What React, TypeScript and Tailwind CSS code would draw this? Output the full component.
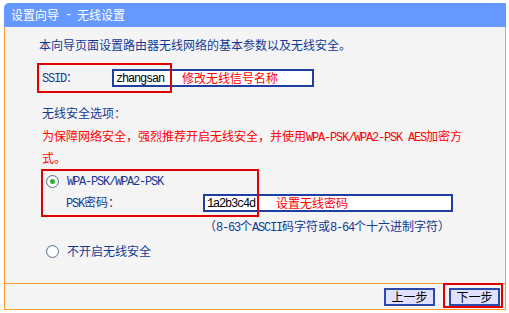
import React from "react";

const M = ({ children }: { children: React.ReactNode }) => (
  <span className="font-mono tracking-[-1.2px]">{children}</span>
);

const Radio = ({ checked }: { checked?: boolean }) => (
  <div className="w-[13px] h-[13px] rounded-full border border-[#5b7592] bg-gradient-to-br from-[#dfe6ee] to-white flex items-center justify-center">
    <div className="w-[9px] h-[9px] rounded-full bg-white flex items-center justify-center">
      {checked && <div className="w-[5px] h-[5px] rounded-full bg-[#2fae2f]" />}
    </div>
  </div>
);

export default function App() {
  return (
    <div className="relative w-[509px] h-[313px] bg-white [font-family:'Noto_Sans_CJK_SC',sans-serif] text-[12px] text-[#133a96] overflow-hidden">
      <div className="pt-[3px] pl-[4px] w-[506px]">
        {/* header */}
        <div className="h-[24px] bg-[#6699ff] rounded-tl-[5px] text-white flex items-center pl-[7px] leading-[24px] whitespace-pre">
          设置向导<M> - </M>无线设置
        </div>
        {/* body */}
        <div className="w-[502px] border-l border-r border-[#ff9933] bg-[#f4f4f4] h-[256px] pl-[34px]">
          <div className="pt-[9px] h-[27px] leading-[18px]">本向导页面设置路由器无线网络的基本参数以及无线安全。</div>
          <div className="mt-[15px] h-[18px] flex items-center">
            <div className="w-[73px] pl-[3px] leading-[18px]">
              <M>SSID</M>：
            </div>
            <div className="w-[202px] h-[18px] bg-white border-2 border-[#1f3fa0] flex items-center pl-[2px] leading-[14px]">
              <span className="text-black w-[66px]"><M>zhangsan</M></span>
              <span className="text-[#ff0000]">修改无线信号名称</span>
            </div>
          </div>
          <div className="mt-[17px] h-[18px] leading-[18px] pl-[3px]">无线安全选项：</div>
          <div className="mt-[4px] pl-[3px] leading-[19px] text-[#ff0000] h-[38px]">
            为保障网络安全，强烈推荐开启无线安全，并使用<M>WPA-PSK/WPA2-PSK AES</M>加密方
            <br />
            式。
          </div>
          <div className="mt-[8px] h-[18px] flex items-center pl-[7px]">
            <Radio checked />
            <span className="ml-[8px] leading-[18px]"><M>WPA-PSK/WPA2-PSK</M></span>
          </div>
          <div className="mt-[4px] h-[18px] flex items-center">
            <div className="w-[164px] pl-[27px] leading-[18px]">
              <M>PSK</M>密码：
            </div>
            <div className="w-[250px] h-[18px] bg-white border-2 border-[#1f3fa0] flex items-center pl-[2px] leading-[14px]">
              <span className="text-black w-[69px]"><M>1a2b3c4d</M></span>
              <span className="text-[#ff0000]">设置无线密码</span>
            </div>
          </div>
          <div className="mt-[5px] h-[18px] leading-[18px] pl-[165px]">
            （<M>8-63</M>个<M>ASCII</M>码字符或<M>8-64</M>个十六进制字符）
          </div>
          <div className="mt-[7px] h-[18px] flex items-center pl-[7px]">
            <Radio />
            <span className="ml-[8px] leading-[18px]">不开启无线安全</span>
          </div>
        </div>
        {/* footer */}
        <div className="w-[502px] h-[27px] border border-[#ff9933] bg-[#f4f4f4] flex items-center justify-end pr-[5px] gap-[14px]">
          <button className="w-[51px] h-[18px] bg-[#e0e0ff] border-2 border-[#2a49a8] text-black text-[12px] leading-[14px]">上一步</button>
          <button className="w-[51px] h-[18px] bg-[#e0e0ff] border-2 border-[#2a49a8] text-black text-[12px] leading-[14px]">下一步</button>
        </div>
      </div>
      {/* annotation boxes */}
      <div className="absolute left-[37px] top-[63px] w-[135px] h-[30px] border-2 border-[#e00000]" />
      <div className="absolute left-[41px] top-[169px] w-[218px] h-[48px] border-2 border-[#e00000]" />
      <div className="absolute left-[443px] top-[283px] w-[60px] h-[25px] border-2 border-[#e00000]" />
    </div>
  );
}
